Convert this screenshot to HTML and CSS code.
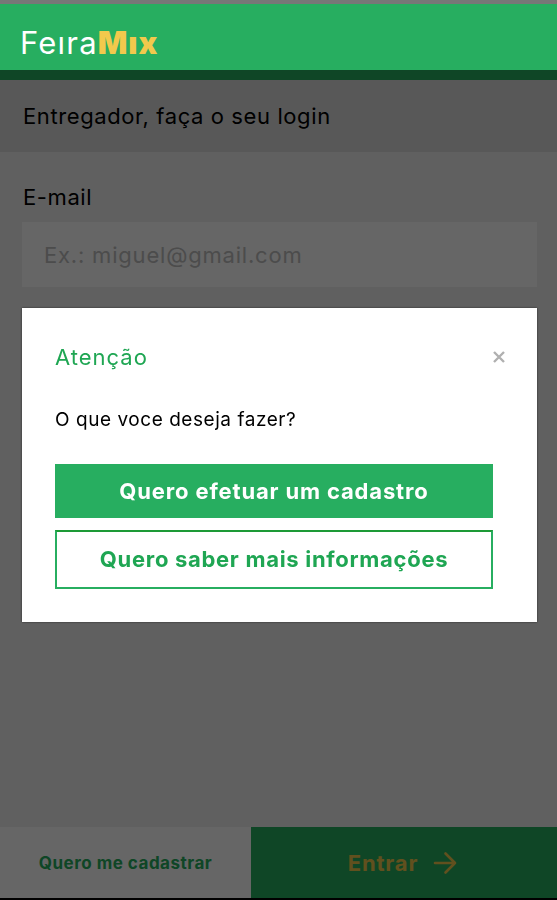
FILE: index.html
```
<!DOCTYPE html>
<html lang="pt-BR">
<head>
    <meta charset="UTF-8">
    <meta name="viewport" content="width=device-width, initial-scale=1.0">
    <title>FeiraMix</title>
    <link rel="stylesheet" href="styles.css">
</head>
<body>
    <div id="page">
        <header>
            <h1 class="logo"><span class="feira">Feıra</span><span class="mix">Mıx</span></h1>
        </header>
        <h2 class="title">Entregador, faça o seu login</h2>
        <form action="">
            <label for="email">E-mail</label>
            <input type="text" id="email" placeholder="Ex.: miguel@gmail.com" autocomplete="off">
        </form>
        <footer>
            <a href="#" class="register">Quero me cadastrar</a>
            <a href="#" class="enter">
                <span>Entrar</span>
                <svg width="24" height="24" viewBox="0 0 24 24" fill="none" stroke="currentColor" stroke-width="2.6" stroke-linecap="round" stroke-linejoin="round">
                    <path d="M2 12H22M12.5 2.5L22 12L12.5 21.5"/>
                </svg>
            </a>
        </footer>
    </div>

    <!-- popup -->
    <div id="popup">
        <div class="inner">
            <div class="top">
                <h2>Atenção</h2>
                <button class="close" aria-label="Fechar">
                    <svg width="12" height="12" viewBox="0 0 12 12" fill="none" stroke="currentColor" stroke-width="2.4">
                        <path d="M1 1L11 11M11 1L1 11"/>
                    </svg>
                </button>
            </div>
            <p>O que voce deseja fazer?</p>
            <a href="#" class="btn fill">Quero efetuar um cadastro</a>
            <a href="#" class="btn line">Quero saber mais informações</a>
        </div>
    </div>
</body>
</html>
```
FILE: styles.css
```
* {
    margin: 0;
    padding: 0;
    box-sizing: border-box;
}
a {
    text-decoration: none;
    color: inherit;
}
body {
    height: 900px;
    overflow: hidden;
    background: #000;
    font-family: Inter, "Open Sans", sans-serif;
    color: #000;
}
#page {
    display: flex;
    flex-direction: column;
    height: 898px;
    background: #f0f0f0;
    border-top: 4px solid #777;
}
header {
    height: 76px;
    padding: 19px 20px 0;
    background: #27ae60;
}
.logo {
    font-size: 31px;
    line-height: 40px;
    color: #fff;
}
.feira {
    font-weight: 400;
    letter-spacing: 1.2px;
}
.mix {
    font-weight: 900;
    letter-spacing: 1px;
    color: #f2c94c;
}
.title {
    height: 72px;
    padding: 0 22px 0 23px;
    background: #dcdcdc;
    font-size: 22px;
    font-weight: 400;
    line-height: 72px;
    letter-spacing: 0.6px;
}
form {
    flex: 1;
    padding: 30px 20px 0 22px;
}
form label {
    display: block;
    padding-left: 1px;
    font-size: 22px;
    line-height: 30px;
    letter-spacing: 0.6px;
    margin-bottom: 10px;
}
form input[type='text'] {
    display: block;
    width: 100%;
    height: 65px;
    padding: 0 22px;
    border: 0;
    outline: 0;
    background: #fff;
    font-family: inherit;
    font-size: 22px;
    letter-spacing: 0.8px;
}
form input::placeholder {
    color: #bdbdbd;
}
footer {
    display: flex;
    height: 71px;
    font-weight: 700;
}
.register,
.enter {
    display: flex;
    align-items: center;
    justify-content: center;
}
.register {
    width: 251px;
    background: #fff;
    color: #27ae60;
    font-size: 17px;
    letter-spacing: 0.5px;
}
.enter {
    flex: 1;
    gap: 15px;
    padding-right: 3px;
    background: #27ae60;
    color: #f2c94c;
    font-size: 22px;
    letter-spacing: 0.8px;
}
#popup {
    position: fixed;
    left: 0;
    top: 70px;
    width: 100%;
    height: 828px;
    padding: 238px 20px 0 22px;
    background: rgba(0,0,0,0.6);
}
#popup .inner {
    height: 314px;
    padding: 33px 44px 0 33px;
    background: #fff;
    box-shadow: 0 0 2px rgba(0,0,0,0.6);
}
#popup .top {
    display: flex;
    justify-content: space-between;
    align-items: center;
    height: 32px;
    margin-right: -12px;
}
#popup h2 {
    font-size: 22px;
    font-weight: 400;
    letter-spacing: 1px;
    color: #1fa653;
}
#popup .close {
    width: 12px;
    height: 12px;
    border: 0;
    background: transparent;
    color: #b0b0b0;
    cursor: pointer;
}
#popup .close svg {
    display: block;
}
#popup p {
    margin: 31px 0 28px;
    font-size: 19px;
    line-height: 32px;
    letter-spacing: 0.55px;
}
#popup .btn {
    display: flex;
    align-items: center;
    justify-content: center;
    border: 2px solid #27ae60;
    font-size: 22px;
    font-weight: 700;
}
#popup .fill {
    height: 54px;
    margin-bottom: 12px;
    background: #27ae60;
    color: #fff;
    letter-spacing: 0.85px;
}
#popup .line {
    height: 59px;
    padding-bottom: 1px;
    border-top-color: #1d9a36;
    color: #1fa653;
    letter-spacing: 0.7px;
}
```
